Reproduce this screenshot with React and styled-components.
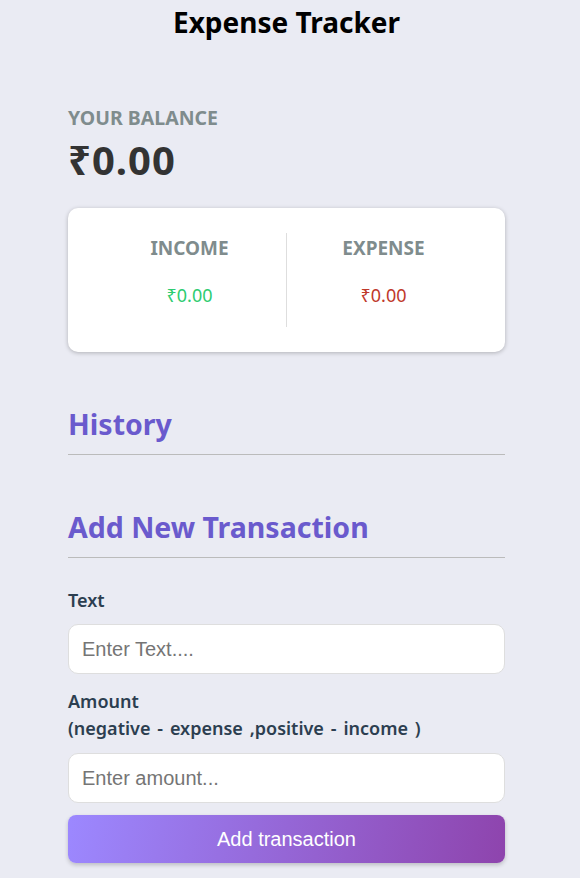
import React from 'react'
import styled, { createGlobalStyle } from 'styled-components'

const GlobalStyle = createGlobalStyle`
    * {
        box-sizing: border-box;
    }
    body {
        margin: 0;
        padding-right: 7px;
        background-color: #eaebf3;
        font-family: "Noto Sans", "Open Sans", sans-serif;
    }
`

export default function App() {
    return (
        <>
            <GlobalStyle />
            <Container>
                <Title>Expense Tracker</Title>
                <BalanceLabel>Your Balance</BalanceLabel>
                <Balance>₹0.00</Balance>

                <Summary>
                    <Column>
                        <ColumnLabel>Income</ColumnLabel>
                        <Money $type="plus">₹0.00</Money>
                    </Column>
                    <Column $divider>
                        <ColumnLabel>Expense</ColumnLabel>
                        <Money $type="minus">₹0.00</Money>
                    </Column>
                </Summary>

                <SectionTitle>History</SectionTitle>

                <SectionTitle>Add New Transaction</SectionTitle>
                <Form onSubmit={e => e.preventDefault()}>
                    <Field>
                        <Label htmlFor="text">Text</Label>
                        <Input id="text" type="text" placeholder="Enter Text...." />
                    </Field>
                    <Field>
                        <Label htmlFor="amount" $gap={11}>
                            Amount <br />
                            (negative - expense ,positive - income )
                        </Label>
                        <Input id="amount" type="number" placeholder="Enter amount..." />
                    </Field>
                    <Button type="submit">Add transaction</Button>
                </Form>
            </Container>
        </>
    )
}

const Container = styled.div`
    width: 437px;
    margin: 0 auto;
    padding-bottom: 15px;
`

const Title = styled.h1`
    margin: 6px 0 0;
    font-size: 28px;
    line-height: 32px;
    font-weight: 700;
    color: #000;
    text-align: center;
`

const BalanceLabel = styled.h4`
    margin: 68px 0 0;
    font-size: 19.5px;
    line-height: 24px;
    font-weight: 700;
    color: #7f8c8d;
    text-transform: uppercase;
`

const Balance = styled.h2`
    margin: 8px 0 0;
    font-size: 40px;
    line-height: 44px;
    font-weight: 700;
    color: #333;
    letter-spacing: 1px;
`

const Summary = styled.div`
    display: flex;
    margin-top: 26px;
    padding: 25px;
    background-color: #fff;
    border-radius: 10px;
    box-shadow: 0 1px 4px rgba(0, 0, 0, 0.25);
`

const Column = styled.div`
    flex: 1;
    display: flex;
    flex-direction: column;
    align-items: center;
    padding: 3px 0 20px;
    border-left: ${p => p.$divider ? '1px solid #dedede' : 'none'};
`

const ColumnLabel = styled.h4`
    margin: 0;
    font-size: 19px;
    line-height: 24px;
    font-weight: 700;
    color: #7f8c8d;
    text-transform: uppercase;
`

const Money = styled.p`
    margin: 23px 0 0;
    font-size: 18px;
    line-height: 24px;
    color: ${p => p.$type === 'plus' ? '#2ecc71' : '#c0392b'};
`

const SectionTitle = styled.h3`
    margin: 54px 0 0;
    padding-bottom: 12px;
    border-bottom: 1px solid #bbb;
    font-size: 28.5px;
    line-height: 36px;
    font-weight: 700;
    color: #6a5acd;
`

const Form = styled.form`
    display: flex;
    flex-direction: column;
    margin-top: 29px;
`

const Field = styled.div`
    display: flex;
    flex-direction: column;
    margin-bottom: 14px;
`

const Label = styled.label`
    font-size: 18px;
    line-height: 27px;
    font-weight: 600;
    color: #2c3e50;
    margin-bottom: ${p => p.$gap || 10}px;
    word-spacing: 2.2px;
`

const Input = styled.input`
    width: 100%;
    height: 50px;
    padding: 10px 13px;
    border: 1px solid #dedede;
    border-radius: 10px;
    background: #fff;
    font-family: "Liberation Sans", Arial, sans-serif;
    font-size: 20px;
    color: #333;
    outline: none;
    -moz-appearance: textfield;

    &::placeholder {
        color: #757575;
    }
    &::-webkit-outer-spin-button,
    &::-webkit-inner-spin-button {
        -webkit-appearance: none;
        margin: 0;
    }
`

const Button = styled.button`
    width: 100%;
    height: 48px;
    margin-top: -2px;
    border: none;
    border-radius: 8px;
    background: linear-gradient(100deg, #9c88ff 0%, #8e44ad 100%);
    box-shadow: 0 2px 4px rgba(0, 0, 0, 0.2);
    color: #fff;
    font-family: "Liberation Sans", Arial, sans-serif;
    font-size: 20px;
    cursor: pointer;
`
